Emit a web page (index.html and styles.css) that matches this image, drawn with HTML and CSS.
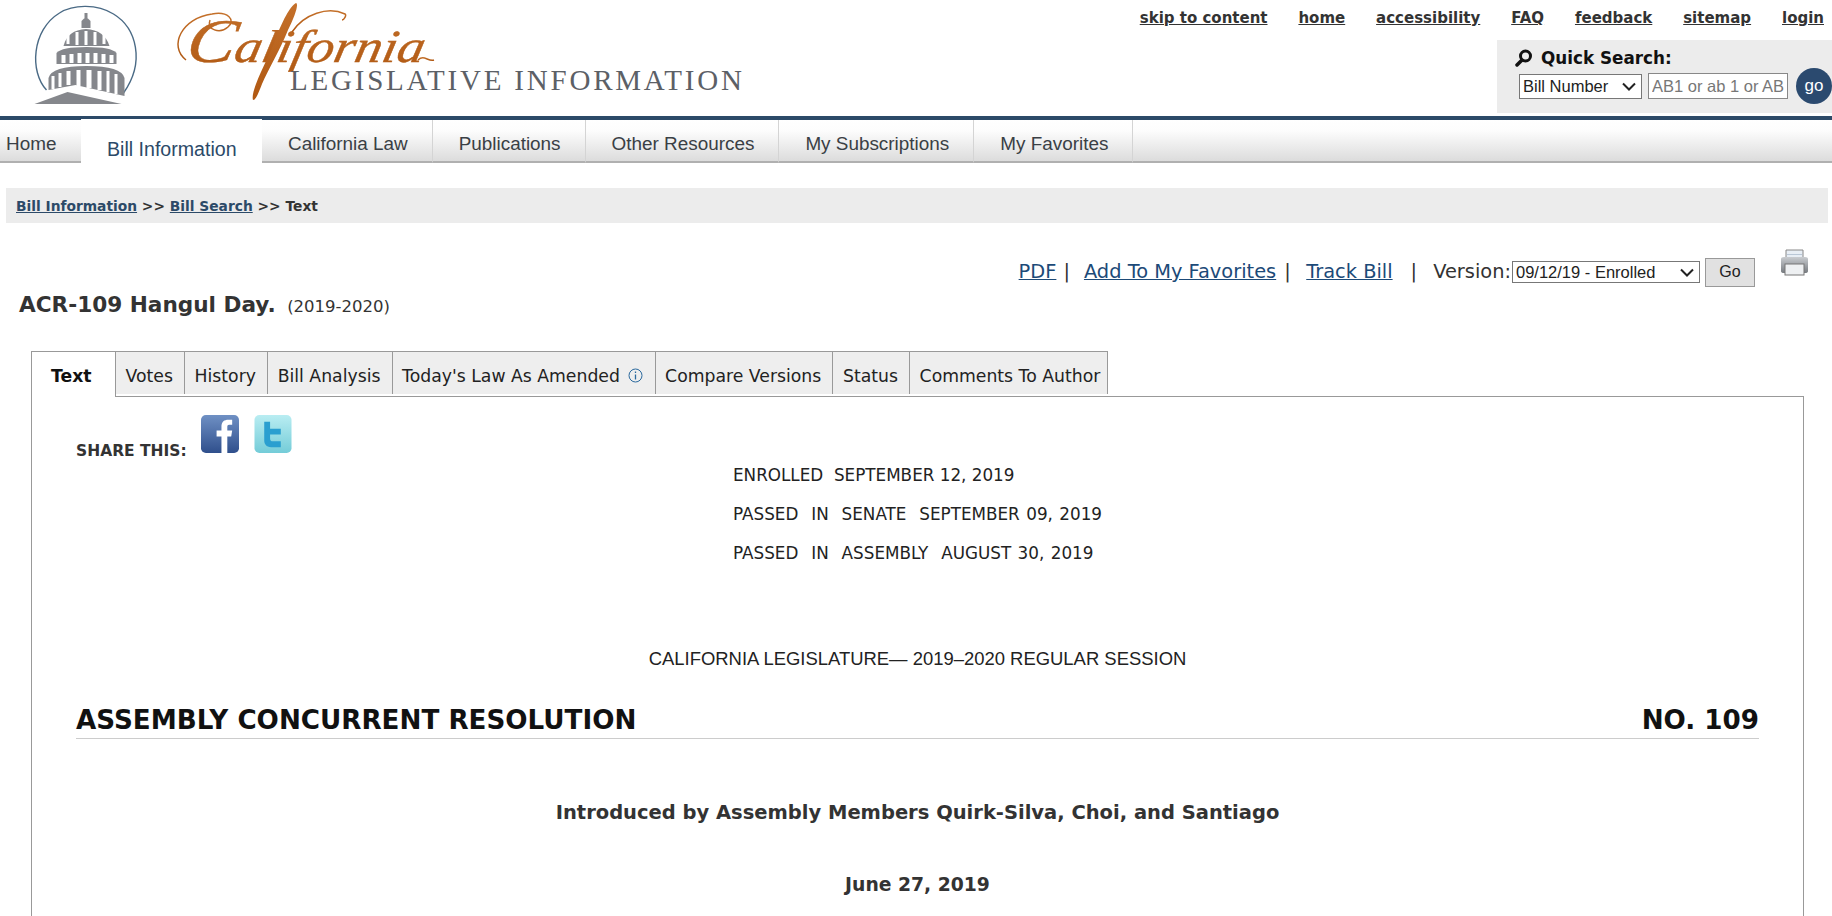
FILE: index.html
```html
<!DOCTYPE html>
<html lang="en">
<head>
<meta charset="utf-8">
<title>ACR-109 Hangul Day.</title>
<link rel="stylesheet" href="styles.css">
</head>
<body>
<header class="top">
  <svg class="logo" width="760" height="116" viewBox="0 0 760 116" role="img" aria-label="California Legislative Information">
    <defs>
      <linearGradient id="orange" x1="0" y1="0" x2="0" y2="1"><stop offset="0" stop-color="#c4702a"/><stop offset="1" stop-color="#b05812"/></linearGradient>
    </defs>
    <g transform="translate(1.500 0)">
      <path d="M45 90 C28 72 30 30 58 13 C72 4 96 4 112 14 C135 28 144 62 122 93" fill="none" stroke="#4a6a85" stroke-width="1.400"/>
      <g fill="#85878c">
        <rect x="83" y="13" width="3" height="6"/>
        <path d="M80 28 V21 Q84.500 15 89 21 V28Z"/>
        <path d="M62 46 Q66 30 84.500 29 Q103 30 108 46 Z"/>
        <path d="M55 64 V53 Q60 47 85 47 Q110 47 115 53 V64 Z"/>
        <path d="M47 90 V78 Q50 66 85 66 Q120 66 123 78 V96 L74 85 L47 90Z"/>
        <path d="M33 104 L66 92 L120 104Z"/>
      </g>
      <g fill="#fff">
        <rect x="65" y="33" width="3" height="11"/><rect x="74" y="32" width="3" height="13"/><rect x="83" y="31" width="3" height="14"/><rect x="92" y="32" width="3" height="13"/><rect x="101" y="33" width="3" height="11"/>
        <rect x="60" y="55" width="4" height="8"/><rect x="68" y="54" width="4" height="9"/><rect x="76" y="53" width="4" height="10"/><rect x="84" y="53" width="4" height="10"/><rect x="92" y="53" width="4" height="10"/><rect x="100" y="54" width="4" height="9"/><rect x="108" y="55" width="4" height="8"/>
        <rect x="50" y="76" width="3" height="13"/><rect x="57" y="73" width="3" height="14"/><rect x="65" y="71" width="4" height="14"/><rect x="75" y="70" width="4" height="16"/><rect x="85" y="70" width="5" height="18"/><rect x="96" y="71" width="4" height="19"/><rect x="105" y="71" width="3" height="21"/><rect x="113" y="74" width="3" height="20"/>
      </g>
    </g>
    <text class="logo-script" transform="translate(184 62) skewX(-12)" textLength="238" lengthAdjust="spacingAndGlyphs"><tspan class="logo-cap">C</tspan>alifornia</text>
    <path d="M186 60 C168 46 182 18 212 14 C228 11 236 20 228 27 C220 34 206 30 210 20" fill="none" stroke="url(#orange)" stroke-width="1.500"/>
    <path d="M253 100 C250 90 268 60 276 38 C282 22 290 6 296 3 C299 4 295 16 288 30 C280 50 268 70 262 84 C258 94 256 100 253 100Z" fill="url(#orange)"/>
    <path d="M292 32 C304 14 328 6 345 14 C347 15 344 20 342 20" fill="none" stroke="url(#orange)" stroke-width="1.500"/>
    <path d="M418 60 C424 54 428 62 434 60" fill="none" stroke="url(#orange)" stroke-width="1.400"/>
    <text class="logo-sub" x="290" y="90" textLength="452">LEGISLATIVE INFORMATION</text>
  </svg>
  <div class="top-right">
    <nav class="util">
      <a href="#">skip to content</a><a href="#">home</a><a href="#">accessibility</a><a href="#">FAQ</a><a href="#">feedback</a><a href="#">sitemap</a><a href="#">login</a>
    </nav>
    <form class="quick">
      <div class="quick-title">
        <svg width="18" height="18" viewBox="0 0 18 18"><circle cx="10.500" cy="7" r="5" fill="none" stroke="#111" stroke-width="3"/><path d="M7 11 L2 16" stroke="#111" stroke-width="3.500" stroke-linecap="round"/></svg>
        <span>Quick Search:</span>
      </div>
      <div class="quick-row">
        <select class="quick-select"><option>Bill Number</option></select>
        <input class="quick-input" type="text" placeholder="AB1 or ab 1 or AB 1">
        <button class="quick-go" type="button">go</button>
      </div>
    </form>
  </div>
</header>

<nav class="mainnav">
  <a class="home" href="#">Home</a>
  <a class="active" href="#">Bill Information</a>
  <a href="#">California Law</a>
  <a href="#">Publications</a>
  <a href="#">Other Resources</a>
  <a href="#">My Subscriptions</a>
  <a href="#">My Favorites</a>
</nav>

<div class="crumbs"><a href="#">Bill Information</a> &gt;&gt; <a href="#">Bill Search</a> &gt;&gt; Text</div>

<div class="toolbar">
  <a href="#">PDF</a><span class="sep1">|</span>
  <a href="#">Add To My Favorites</a><span class="sep2">|</span>
  <a href="#">Track Bill</a><span class="sep3">|</span>
  <span>Version:</span>
  <select class="version"><option>09/12/19 - Enrolled</option></select>
  <button class="version-go" type="button">Go</button>
  <svg class="printer" width="29" height="28" viewBox="0 0 29 28">
    <defs><linearGradient id="pr" x1="0" y1="0" x2="0" y2="1"><stop offset="0" stop-color="#c9ccd0"/><stop offset="1" stop-color="#777b80"/></linearGradient></defs>
    <path d="M6 1 H23 V11 H6Z" fill="#e8eef5" stroke="#888"/>
    <path d="M1 10 Q1 8 4 8 H25 Q28 8 28 10 V22 Q28 24 25 24 H4 Q1 24 1 22Z" fill="url(#pr)"/>
    <rect x="5" y="15" width="19" height="11" fill="#eef0f2" stroke="#777"/>
    <rect x="7" y="5" width="15" height="1" fill="#b9c7d6"/>
  </svg>
</div>

<h1 class="title">ACR-109 Hangul Day. <small>(2019-2020)</small></h1>

<ul class="tabs">
  <li class="active">Text</li>
  <li>Votes</li>
  <li>History</li>
  <li>Bill Analysis</li>
  <li>Today's Law As Amended
    <svg width="15" height="15" viewBox="0 0 15 15"><circle cx="7.500" cy="7.500" r="6.500" fill="none" stroke="#2c6a9e"/><path d="M7.500 6.500 V11.500 M7.500 3.500 V5" stroke="#2c6a9e" stroke-width="1.300"/></svg>
  </li>
  <li>Compare Versions</li>
  <li>Status</li>
  <li class="last">Comments To Author</li>
</ul>

<main class="panel">
  <div class="share">
    <span>SHARE THIS:</span>
    <svg class="fb" width="38" height="38" viewBox="0 0 39 39">
      <defs><linearGradient id="fbg" x1="0" y1="0" x2="0" y2="1"><stop offset="0" stop-color="#6f90c4"/><stop offset="1" stop-color="#2f4f8c"/></linearGradient></defs>
      <rect width="39" height="39" rx="5" fill="url(#fbg)"/>
      <path d="M21 39 V22 H16 V16 H21 V12 C21 7 24 5 28 5 H32 V10 H29 C27 10 27 11 27 13 V16 H32 L31 22 H27 V39Z" fill="#fff"/>
    </svg>
    <svg class="tw" width="38" height="38" viewBox="0 0 38 39">
      <defs><linearGradient id="twg" x1="0" y1="0" x2="0" y2="1"><stop offset="0" stop-color="#b9edf2"/><stop offset="1" stop-color="#74ccd8"/></linearGradient></defs>
      <rect width="38" height="39" rx="5" fill="url(#twg)"/>
      <path d="M10 7 H16 V14 H27 V20 H16 V24 C16 26 17 27 19 27 H27 V33 H17 C12 33 10 30 10 26Z" fill="#2a9fd0"/>
    </svg>
  </div>
  <div class="status">
    <p>ENROLLED&nbsp; SEPTEMBER 12, 2019</p>
    <p class="spaced">PASSED&nbsp; IN&nbsp; SENATE&nbsp; SEPTEMBER 09, 2019</p>
    <p class="spaced">PASSED&nbsp; IN&nbsp; ASSEMBLY&nbsp; AUGUST 30, 2019</p>
  </div>
  <p class="session">CALIFORNIA LEGISLATURE— 2019–2020 REGULAR SESSION</p>
  <div class="measure"><span>ASSEMBLY CONCURRENT RESOLUTION</span><span>NO. 109</span></div>
  <p class="intro">Introduced by Assembly Members Quirk-Silva, Choi, and Santiago</p>
  <p class="date">June 27, 2019</p>
</main>
</body>
</html>
```

FILE: styles.css
```css
*, *::before, *::after { box-sizing: border-box; }
html, body { margin: 0; height: 916px; overflow: hidden; }
body {
  display: flex;
  flex-direction: column;
  background: #fff;
  color: #333;
  font-family: "DejaVu Sans", Verdana, sans-serif;
}
a { color: inherit; }
p { margin: 0; }

.top { display: flex; justify-content: space-between; height: 116px; flex: none; }
.logo { display: block; }
.logo-script { font-family: "Liberation Serif", serif; font-style: italic; font-size: 46px; fill: url(#orange); stroke: #b5601a; stroke-width: 0.400px; }
.logo-cap { font-size: 62px; }
.logo-sub { font-family: "Liberation Serif", serif; font-size: 29px; fill: #5c6066; }
.top-right { display: flex; flex-direction: column; align-items: flex-end; width: 800px; }
.util { display: flex; gap: 30.900px; padding: 9px 8px 0 0; height: 40px; font-size: 15px; font-weight: 700; line-height: 18px; color: #333; }
.quick { width: 335px; height: 73px; background: #ececec; padding: 6px 0 0 18px; overflow: hidden; }
.quick-title { display: flex; align-items: center; gap: 8px; height: 24px; font-size: 16.800px; font-weight: 700; color: #111; }
.quick-row { display: flex; align-items: center; gap: 6px; margin: -2px 0 0 4px; }
.quick-select, .version {
  appearance: none;
  background: #fff url("data:image/svg+xml,%3Csvg xmlns='http://www.w3.org/2000/svg' width='14' height='9'%3E%3Cpath d='M1 1.500 L7 7.500 L13 1.500' fill='none' stroke='%23222' stroke-width='2'/%3E%3C/svg%3E") no-repeat right 5px center;
  border: 1px solid #777;
  border-radius: 0;
  color: #222;
  padding: 0 0 0 3px;
  font: 16.500px "Liberation Sans", Arial, sans-serif;
}
.quick-select { width: 123px; height: 25px; }
.quick-input { width: 140px; height: 26px; font: 16.500px "Liberation Sans", Arial, sans-serif; background: #fff; border: 1px solid #888; padding: 0 3px; border-radius: 0; }
.quick-input::placeholder { color: #777; opacity: 1; }
.quick-go { flex: none; width: 36px; height: 36px; margin-left: 2px; border: 0; border-radius: 50%; background: #2b4a6f; color: #fff; font: 17px "Liberation Sans", Arial, sans-serif; padding: 0; }

.mainnav {
  display: flex;
  flex: none;
  align-items: flex-start;
  height: 47px;
  border-top: 4px solid #2c4a68;
  font-family: "Liberation Sans", Arial, sans-serif;
  font-size: 18.900px;
  color: #3a3f45;
}
.mainnav a {
  height: 43px;
  line-height: 47px;
  padding: 0 24px 0 26px;
  text-decoration: none;
  background: linear-gradient(#fff, #fdfdfd 25%, #dcdcdc);
  border-bottom: 2px solid #b0b0b0;
  border-right: 1px solid #d4d4d4;
}
.mainnav a.home { width: 81px; padding: 0 0 0 6px; border-right: 0; }
.mainnav a.active {
  width: 181px;
  height: 47px;
  padding: 7px 0 0 26px;
  line-height: 46px;
  margin-top: -1px;
  background: #fff;
  border: 0;
  color: #2c4a68;
  font-size: 19.600px;
}
.mainnav::after {
  content: "";
  flex: 1;
  height: 43px;
  background: linear-gradient(#fff, #fdfdfd 25%, #dcdcdc);
  border-bottom: 2px solid #b0b0b0;
}

.crumbs {
  flex: none;
  margin: 25px 4px 0 6px;
  height: 35px;
  line-height: 36px;
  padding-left: 10px;
  background: #ececec;
  font-size: 13.800px;
  font-weight: 700;
  color: #333;
}
.crumbs a { color: #2c4a68; }

.toolbar {
  flex: none;
  display: flex;
  align-items: center;
  justify-content: flex-end;
  height: 39px;
  margin-top: 28px;
  padding: 2px 23px 0 0;
  font-size: 19.400px;
  color: #333;
}
.toolbar a { color: #1c4a78; }
.sep1 { margin: 0 14px 0 7px; }
.sep2 { margin: 0 15.500px 0 8px; }
.sep3 { margin: 0 16px 0 18px; }
.version { width: 188px; height: 22px; margin: 1px 5px 0 1px; }
.version-go { width: 50px; height: 29px; margin-top: 1px; font: 16px "Liberation Sans", Arial, sans-serif; background: #e1e1e1; border: 1px solid #999; border-radius: 0; color: #222; padding: 0; }
.printer { margin: -18px 0 0 25px; }

.title { flex: none; margin: -1px 0 0 19px; height: 30px; line-height: 31px; font-size: 21.600px; font-weight: 700; color: #333; }
.title small { margin-left: 4px; font-size: 16.500px; font-weight: 400; }

.tabs {
  flex: none;
  display: flex;
  list-style: none;
  height: 45px;
  margin: 32px 0 0 31px;
  padding: 0;
  font-size: 17.250px;
  color: #222;
}
.tabs li {
  height: 43px;
  line-height: 48px;
  padding: 0 11.200px 0 9.500px;
  background: #eee;
  border: 1px solid #999;
  border-left: 0;
  border-bottom: 0;
  white-space: nowrap;
}
.tabs li svg { vertical-align: -1px; margin-left: 3px; }
.tabs li.last { padding-right: 6.500px; }
.tabs li.active {
  height: 46px;
  width: 85px;
  padding-left: 19px;
  background: #fff;
  font-weight: 700;
  color: #111;
  border-left: 1px solid #999;
  position: relative;
  z-index: 1;
}

.panel {
  flex: 1;
  margin: 0 28px 0 31px;
  padding: 19px 44px 0;
  border: 1px solid #999;
  border-bottom: 0;
}
.share { display: flex; align-items: flex-end; height: 37px; font-size: 15.500px; font-weight: 700; }
.share span { width: 125px; line-height: 18px; margin-bottom: -7px; white-space: nowrap; }
.fb { flex: none; margin-right: 15px; }
.tw { flex: none; }
.status { margin: 3px 0 0 657px; font-size: 16.800px; line-height: 39px; color: #222; white-space: nowrap; }
.spaced { word-spacing: 1.100px; }
.session { margin-top: 74px; text-align: center; font-family: "Liberation Sans", Arial, sans-serif; font-size: 18.450px; line-height: 24px; color: #222; }
.measure { display: flex; justify-content: space-between; height: 37px; line-height: 36px; margin-top: 31px; font-size: 26.200px; font-weight: 700; color: #111; border-bottom: 1px solid #ccc; }
.intro { margin-top: 59px; text-align: center; font-size: 19.500px; line-height: 30px; font-weight: 700; color: #333; }
.date { margin-top: 42px; text-align: center; font-size: 18.750px; line-height: 30px; font-weight: 700; color: #333; }
```
